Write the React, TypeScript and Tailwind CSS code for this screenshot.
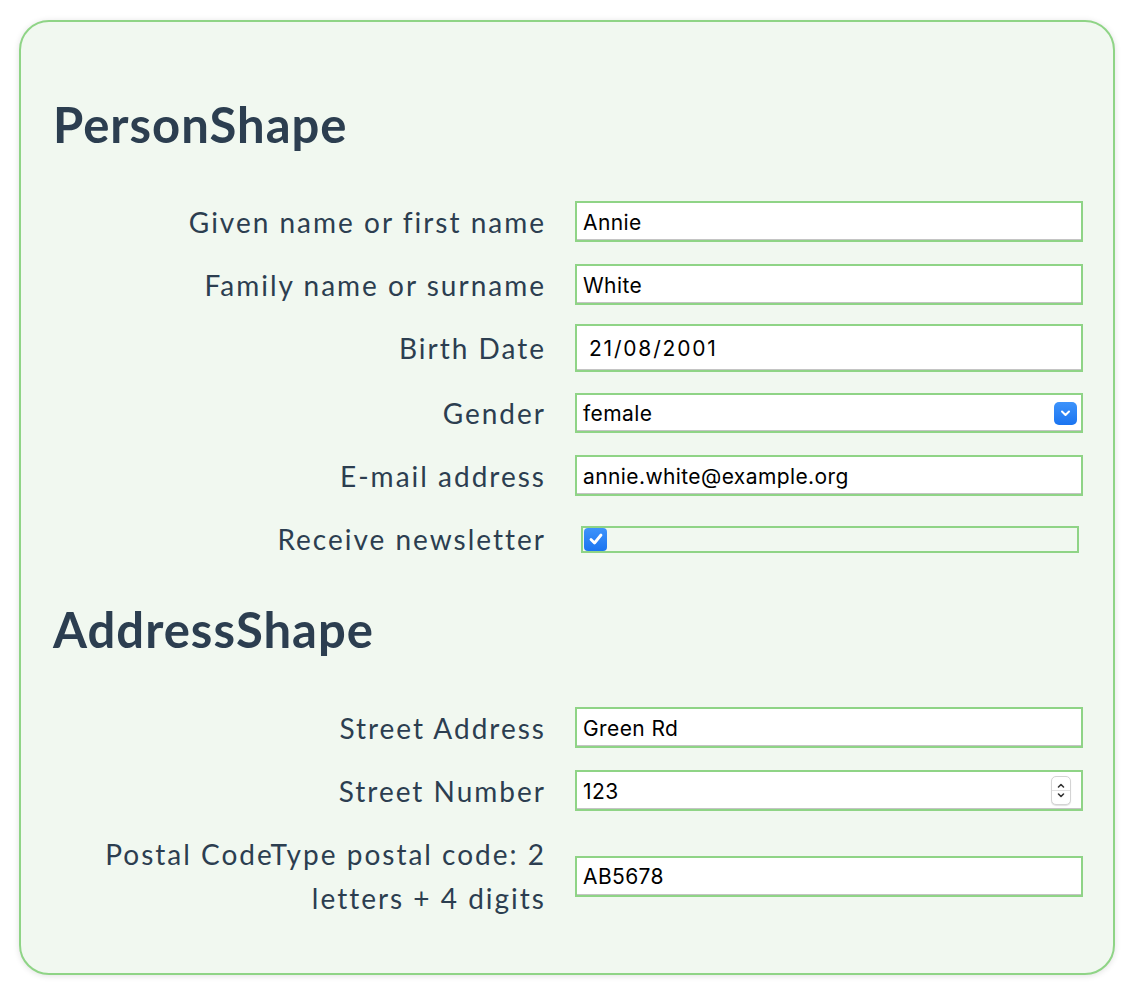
import React from "react";

const labelCls =
  "w-[493px] shrink-0 text-right text-[28px] leading-[40px] tracking-[2px] text-[#2c3e50] font-['Lato',sans-serif]";
const boxCls =
  "w-[508px] shrink-0 border-2 border-[#8fd486] bg-white flex items-center pt-[2px] text-[21px] tracking-[0.4px] text-black font-['Inter','Liberation_Sans',sans-serif] shadow-[inset_0_-1px_0_#c4c4c4]";

function Row({ label, mt, children }: { label: React.ReactNode; mt: string; children: React.ReactNode }) {
  return (
    <div className={`flex items-center gap-x-[29px] ${mt}`}>
      <div className={labelCls}>{label}</div>
      {children}
    </div>
  );
}

function TextBox({ value, h = "h-[41px]" }: { value: string; h?: string }) {
  return (
    <div className={`${boxCls} ${h} pl-[6px]`}>
      <span>{value}</span>
    </div>
  );
}

export default function App() {
  return (
    <div className="min-h-[1002px] bg-white pt-[20px] pl-[19px]">
      <div className="w-[1096px] h-[955px] rounded-[30px] border-2 border-[#8fd486] bg-[#f1f8f0] shadow-[0_1px_6px_rgba(0,0,0,0.12)] pl-[32px] pt-[74px]">
        <h2 className="text-[49px] leading-[56px] tracking-[1px] font-bold text-[#2c3e50] font-['Lato',sans-serif]">PersonShape</h2>

        <Row label="Given name or first name" mt="mt-[49px]">
          <TextBox value="Annie" />
        </Row>
        <Row label="Family name or surname" mt="mt-[22px]">
          <TextBox value="White" />
        </Row>
        <Row label="Birth Date" mt="mt-[19px]">
          <div className={`${boxCls} h-[48px] pl-[12px] !tracking-[1.8px]`}>
            <span>21/08/2001</span>
          </div>
        </Row>
        <Row label="Gender" mt="mt-[21px]">
          <div className={`${boxCls} h-[40px] pl-[6px] pr-[4px] justify-between`}>
            <span>female</span>
            <div className="-mt-[2px] w-[23px] h-[23px] rounded-[5px] bg-gradient-to-b from-[#3d93fb] to-[#1a74f0] flex items-center justify-center">
              <svg width="11" height="8" viewBox="0 0 11 8" fill="none">
                <path d="M2 2.5 L5.5 6 L9 2.5" stroke="white" strokeWidth="2" strokeLinecap="round" strokeLinejoin="round" />
              </svg>
            </div>
          </div>
        </Row>
        <Row label="E-mail address" mt="mt-[22px]">
          <TextBox value="annie.white@example.org" />
        </Row>
        <Row label="Receive newsletter" mt="mt-[23px]">
          <div className="w-[498px] h-[27px] ml-[6px] border-2 border-[#8fd486] flex items-center pl-[1px]">
            <div className="w-[23px] h-[23px] rounded-[4px] bg-gradient-to-b from-[#3d93fb] to-[#1a74f0] flex items-center justify-center">
              <svg width="16" height="14" viewBox="0 0 16 14" fill="none">
                <path d="M3 7.5 L6.5 11 L13 3" stroke="white" strokeWidth="2.8" strokeLinecap="round" strokeLinejoin="round" />
              </svg>
            </div>
          </div>
        </Row>

        <h2 className="mt-[42px] text-[49px] leading-[56px] tracking-[1px] font-bold text-[#2c3e50] font-['Lato',sans-serif]">AddressShape</h2>

        <Row label="Street Address" mt="mt-[50px]">
          <TextBox value="Green Rd" />
        </Row>
        <Row label="Street Number" mt="mt-[22px]">
          <div className={`${boxCls} h-[41px] pl-[6px] pr-[10px] justify-between`}>
            <span>123</span>
            <div className="-mt-[2px] w-[20px] h-[29px] rounded-[5px] bg-white border border-[#d4d4d4] shadow-[0_1px_1px_rgba(0,0,0,0.12)] flex flex-col items-center justify-center">
              <svg width="10" height="9" viewBox="0 0 10 9" fill="none">
                <path d="M2.5 6 L5 3.5 L7.5 6" stroke="#333" strokeWidth="1.6" strokeLinecap="round" strokeLinejoin="round" />
              </svg>
              <div className="w-full h-px bg-[#e2e2e2]" />
              <svg width="10" height="9" viewBox="0 0 10 9" fill="none">
                <path d="M2.5 3 L5 5.5 L7.5 3" stroke="#333" strokeWidth="1.6" strokeLinecap="round" strokeLinejoin="round" />
              </svg>
            </div>
          </div>
        </Row>
        <div className="flex items-center gap-x-[29px] mt-[21px]">
          <div className={`${labelCls} !leading-[44px]`}>
            Postal CodeType postal code: 2<br />letters + 4 digits
          </div>
          <TextBox value="AB5678" />
        </div>
      </div>
    </div>
  );
}
